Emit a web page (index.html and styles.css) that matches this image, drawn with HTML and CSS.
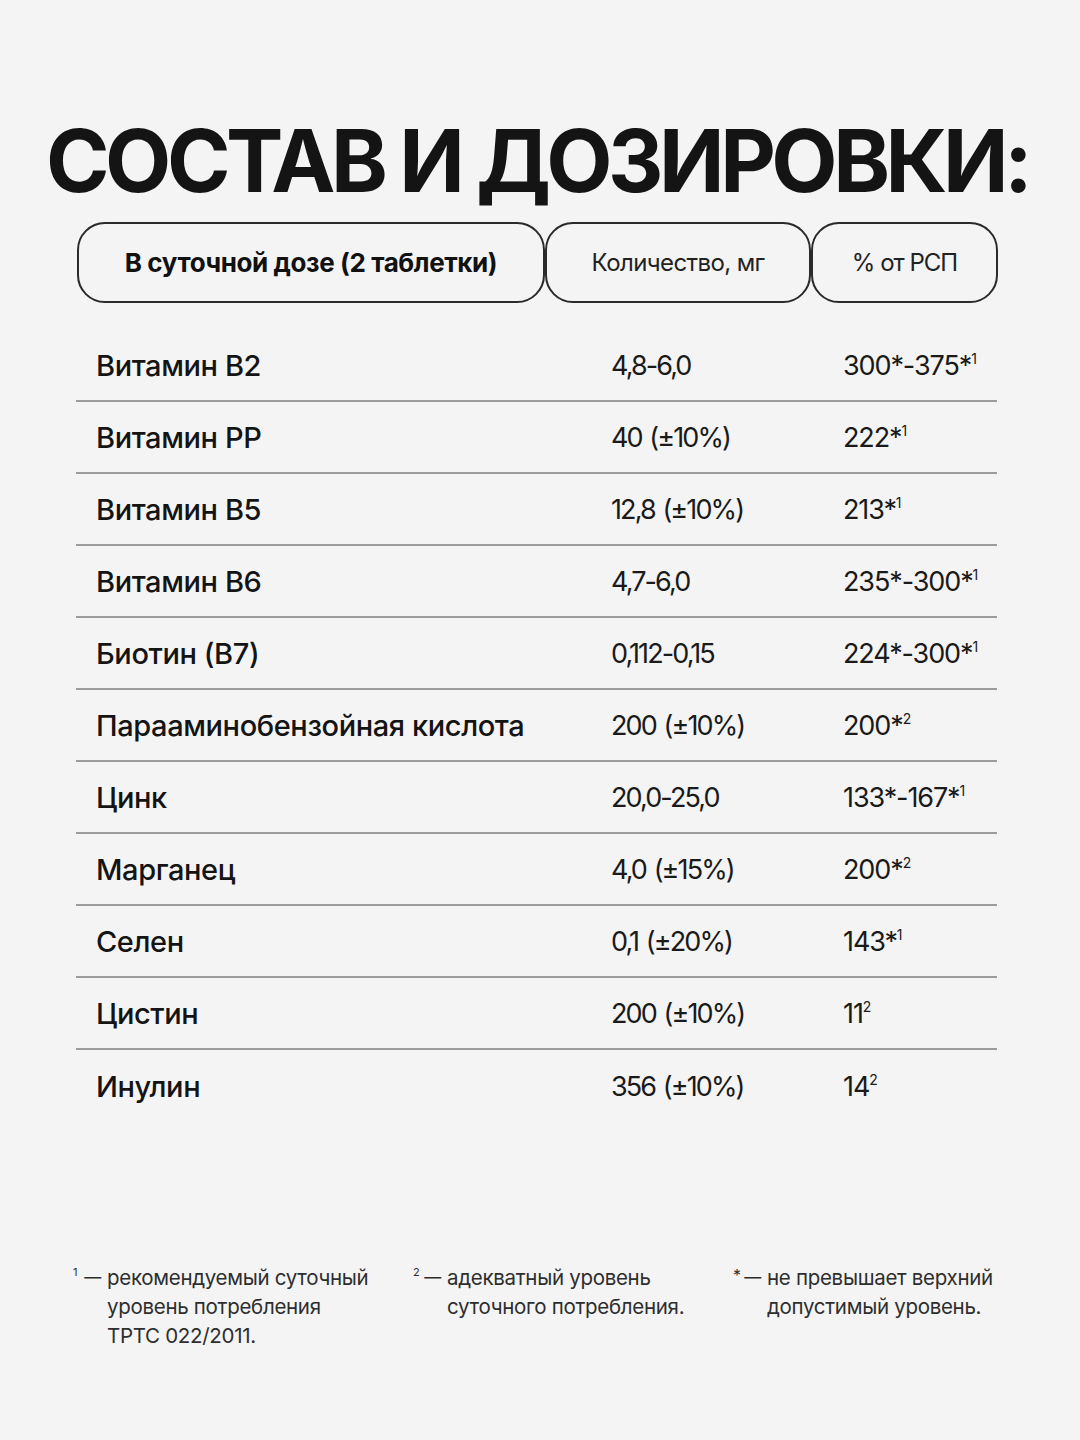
FILE: index.html
```html
<!DOCTYPE html>
<html lang="ru">
<head>
<meta charset="utf-8">
<link rel="stylesheet" href="styles.css">
</head>
<body>
<main class="page">
  <h1 class="title">СОСТАВ И ДОЗИРОВКИ:</h1>
  <div class="head">
    <div class="pill pill-1">В суточной дозе (2 таблетки)</div>
    <div class="pill pill-2">Количество, мг</div>
    <div class="pill pill-3">% от РСП</div>
  </div>
  <div class="table">
    <div class="row"><span class="c1">Витамин B2</span><span class="c2">4,8-6,0</span><span class="c3">300*-375*<sup>1</sup></span></div>
    <div class="row"><span class="c1">Витамин PP</span><span class="c2">40 (±10%)</span><span class="c3">222*<sup>1</sup></span></div>
    <div class="row"><span class="c1">Витамин B5</span><span class="c2">12,8 (±10%)</span><span class="c3">213*<sup>1</sup></span></div>
    <div class="row"><span class="c1">Витамин B6</span><span class="c2">4,7-6,0</span><span class="c3">235*-300*<sup>1</sup></span></div>
    <div class="row"><span class="c1">Биотин (B7)</span><span class="c2">0,112-0,15</span><span class="c3">224*-300*<sup>1</sup></span></div>
    <div class="row"><span class="c1">Парааминобензойная кислота</span><span class="c2">200 (±10%)</span><span class="c3">200*<sup>2</sup></span></div>
    <div class="row"><span class="c1">Цинк</span><span class="c2">20,0-25,0</span><span class="c3">133*-167*<sup>1</sup></span></div>
    <div class="row"><span class="c1">Марганец</span><span class="c2">4,0 (±15%)</span><span class="c3">200*<sup>2</sup></span></div>
    <div class="row"><span class="c1">Селен</span><span class="c2">0,1 (±20%)</span><span class="c3">143*<sup>1</sup></span></div>
    <div class="row"><span class="c1">Цистин</span><span class="c2">200 (±10%)</span><span class="c3">11<sup>2</sup></span></div>
    <div class="row last"><span class="c1">Инулин</span><span class="c2">356 (±10%)</span><span class="c3">14<sup>2</sup></span></div>
  </div>
  <div class="notes">
    <div class="note n1"><span class="lead"><span class="mark">1</span><span class="dash">—</span></span><span class="txt">рекомендуемый суточный<br>уровень потребления<br>ТРТС 022/2011.</span></div>
    <div class="note n2"><span class="lead"><span class="mark">2</span><span class="dash">—</span></span><span class="txt">адекватный уровень<br>суточного потребления.</span></div>
    <div class="note n3"><span class="lead"><span class="mark star">*</span><span class="dash">—</span></span><span class="txt">не превышает верхний<br>допустимый уровень.</span></div>
  </div>
</main>
</body>
</html>
```
FILE: styles.css
```css
html, body {
  margin: 0;
  padding: 0;
  background: #f4f4f4;
}
body {
  width: 1080px;
  height: 1440px;
  overflow: hidden;
  font-family: "Inter", "Liberation Sans", sans-serif;
  color: #111;
}
.page {
  padding: 111px 0 0 0;
}
.title {
  margin: 0 0 0 46px;
  font-size: 86px;
  line-height: 100px;
  font-weight: 700;
  letter-spacing: -4.5px;
  word-spacing: 0;
  color: #141414;
  white-space: nowrap;
}
.head {
  display: flex;
  margin: 11px 0 0 77px;
  height: 81px;
}
.pill {
  box-sizing: border-box;
  height: 81px;
  border: 2px solid #2a2a2a;
  border-radius: 28px;
  display: flex;
  align-items: center;
  justify-content: center;
  font-size: 24px;
  letter-spacing: -0.6px;
  color: #222;
}
.pill-1 { width: 468px; font-weight: 700; color: #111; font-size: 26px; letter-spacing: -0.4px; }
.pill-2 { width: 266px; }
.pill-3 { width: 187px; letter-spacing: -1px; }
.table {
  margin: 27px 0 0 76px;
  width: 921px;
}
.row {
  display: grid;
  grid-template-columns: 535px 232px 1fr;
  align-items: center;
  height: 72px;
  box-sizing: border-box;
  border-bottom: 2px solid #9c9c9c;
  font-size: 27px;
}
.row.last { border-bottom: none; }
.c1 { padding-left: 20px; font-weight: 500; color: #141414; font-size: 29px; letter-spacing: -0.4px; }
.c2 { color: #1a1a1a; letter-spacing: -1.9px; word-spacing: 2px; }
.c3 { color: #1a1a1a; letter-spacing: -1.1px; }
sup {
  font-size: 14px;
  vertical-align: 11px;
  line-height: 0;
  letter-spacing: 0;
}
.notes {
  display: flex;
  margin: 141px 0 0 73px;
  font-size: 20.5px;
  line-height: 29px;
  color: #2e2e2e;
  letter-spacing: -0.3px;
}
.note { display: flex; align-items: flex-start; }
.lead {
  display: flex;
  justify-content: space-between;
  width: 28px;
  padding-right: 6px;
  flex: none;
  height: 29px;
}
.mark {
  font-size: 11px;
  line-height: 18px;
}
.mark.star { font-size: 16px; line-height: 24px; }
.dash { font-size: 17px; line-height: 29px; }
.n1 { width: 340px; }
.n2 { width: 320px; }
```
